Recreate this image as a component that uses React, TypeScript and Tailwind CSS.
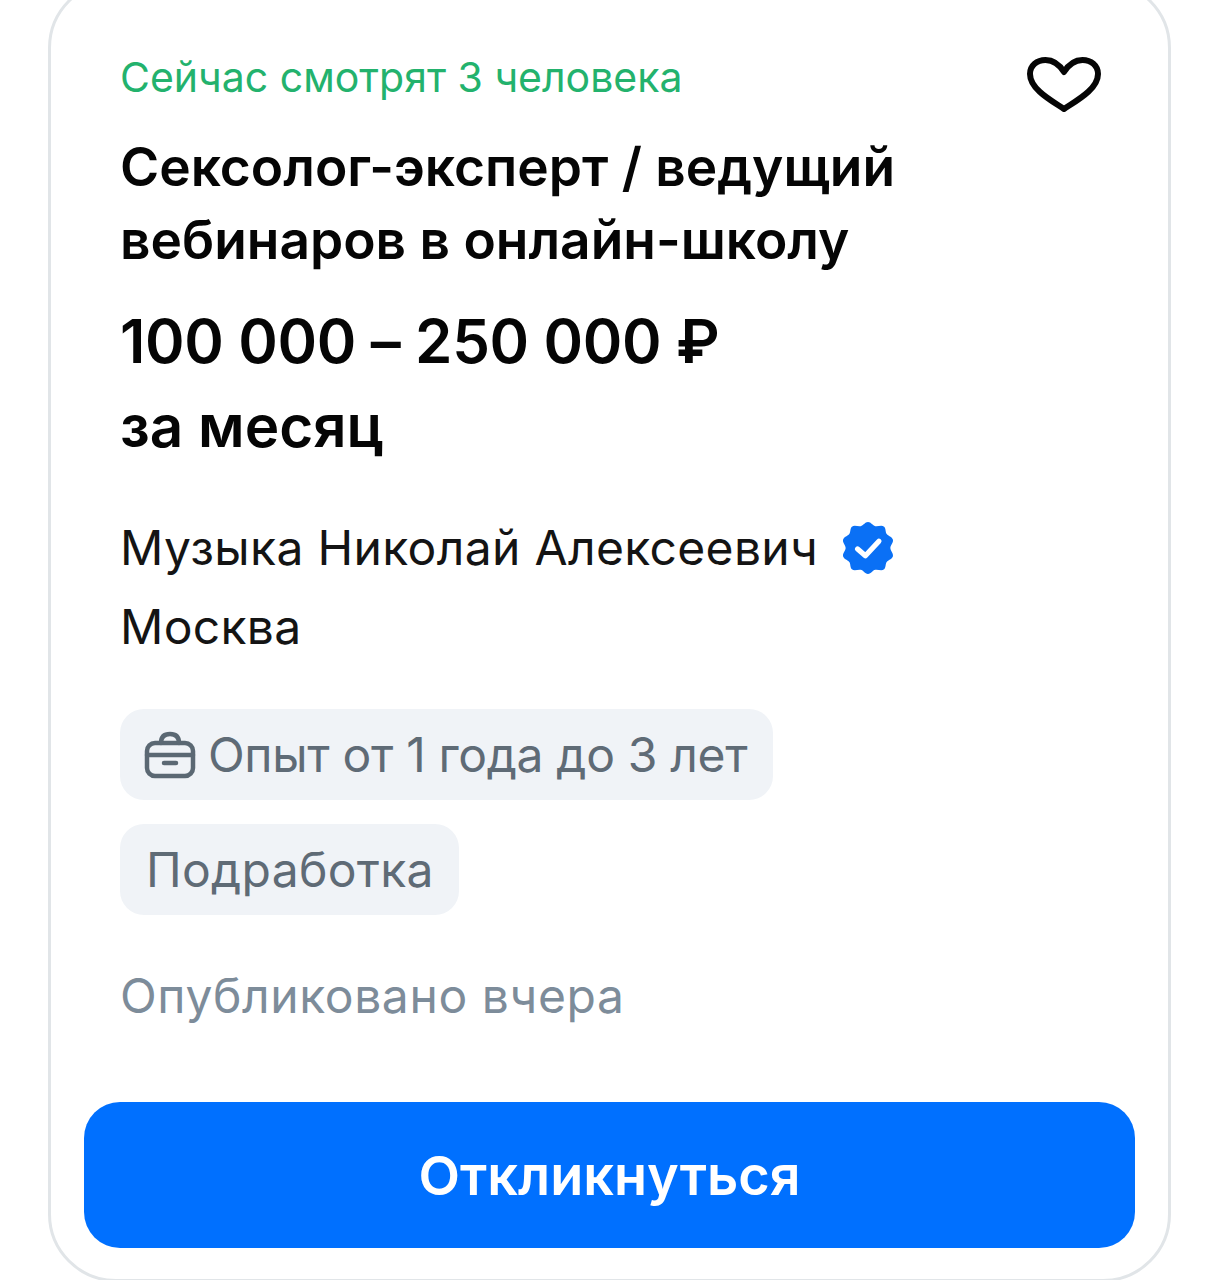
export default function App() {
  return (
    <div className="h-[1280px] overflow-hidden bg-white pt-px font-['Inter','Noto_Sans',sans-serif]">
      <div className="mx-[48px] mt-[-21px] h-[1302px] rounded-[68px] border-[3px] border-[#e1e5e8] px-[33px] pt-[72px]">
        <div className="px-[37px]">
          <div className="flex items-start justify-between">
            <div className="ml-[-1px] text-[41px] leading-[44px] text-[#23b26d]">Сейчас смотрят 3 человека</div>
            <svg className="mr-[-4px] mt-[2px] h-[58px] w-[76px]" viewBox="0 0 76 58" fill="none">
              <path d="M38 52 C28 45 4 33 4 17 C4 8.5 11 3 19.5 3 C27 3 33 7 38 15 C43 7 49 3 56.500 3 C65 3 72 8.500 72 17 C72 33 48 45 38 52 Z" stroke="#050505" strokeWidth="6" strokeLinejoin="round" />
            </svg>
          </div>
          <h1 className="ml-[-1px] mt-[15px] text-[53.25px] font-semibold leading-[73px] text-[#050505]">
            Сексолог-эксперт / ведущий
            <br />
            вебинаров в онлайн-школу
          </h1>
          <div className="ml-[-1px] mt-[29px] text-[60px] font-semibold leading-[72px] tracking-[-0.35px] text-[#050505]">100 000 – 250 000 ₽</div>
          <div className="ml-[-1px] mt-[13px] text-[58.4px] font-semibold leading-[72px] text-[#050505]">за месяц</div>
          <div className="ml-[-1px] mt-[56px] flex items-center text-[48px] leading-[60px] text-[#141414]">
            <span className="tracking-[0.34px]">Музыка Николай Алексеевич</span>
            <svg className="ml-[24px] h-[52px] w-[52px]" viewBox="1 1 50 50">
              <path d="M26 1 C29 1 30.500 4.500 33 5 C36 5.500 39 3.500 41.500 5.500 C43.500 7.500 42.500 10.500 44 12.500 C45.500 14.500 49 15 50 18 C50.500 21 47.500 23.500 47.500 26 C47.500 28.500 50.500 31 50 34 C49 37 45.500 37.500 44 39.500 C42.500 41.500 43.500 44.500 41.500 46.500 C39 48.500 36 46.500 33 47 C30.500 47.500 29 51 26 51 C23 51 21.500 47.500 19 47 C16 46.500 13 48.500 10.500 46.500 C8.500 44.500 9.500 41.500 8 39.500 C6.500 37.500 3 37 2 34 C1.500 31 4.500 28.500 4.500 26 C4.500 23.500 1.500 21 2 18 C3 15 6.500 14.500 8 12.500 C9.500 10.500 8.500 7.500 10.500 5.500 C13 3.500 16 5.500 19 5 C21.500 4.500 23 1 26 1 Z" fill="#0a70f5" />
              <path d="M16 27 L23.500 33.500 L36.500 19.500" fill="none" stroke="#fff" strokeWidth="5" strokeLinecap="round" strokeLinejoin="round" />
            </svg>
          </div>
          <div className="ml-[-1px] mt-[19px] text-[48px] leading-[60px] tracking-[0.3px] text-[#141414]">Москва</div>
          <div className="ml-[-1px] mt-[52px] flex h-[91px] w-fit items-center rounded-[24px] bg-[#f0f3f7] pl-[24px] pr-[26px] text-[48px] tracking-[-0.33px] text-[#5f6b76]">
            <svg className="mr-[12px] h-[48px] w-[52px]" viewBox="0 0 52 48" fill="none" stroke="#5b6873" strokeWidth="4.500" strokeLinecap="round" strokeLinejoin="round">
              <rect x="3" y="12" width="46" height="33" rx="8" />
              <path d="M3 24 H49" />
              <path d="M17 12 C17 5 21 3 26 3 C31 3 35 5 35 12" />
              <path d="M20 32 H32" />
            </svg>
            Опыт от 1 года до 3 лет
          </div>
          <div className="ml-[-1px] mt-[24px] flex h-[91px] w-fit items-center rounded-[24px] bg-[#f0f3f7] pl-[26px] pr-[25px] text-[48px] tracking-[0.3px] text-[#5f6b76]">Подработка</div>
          <div className="ml-[-1px] mt-[51px] text-[48px] leading-[60px] tracking-[0.6px] text-[#7d8c9a]">Опубликовано вчера</div>
        </div>
        <button className="mt-[76px] flex h-[146px] w-full items-center justify-center rounded-[36px] bg-[#0070ff] text-[54px] font-semibold text-white">Откликнуться</button>
      </div>
    </div>
  );
}
